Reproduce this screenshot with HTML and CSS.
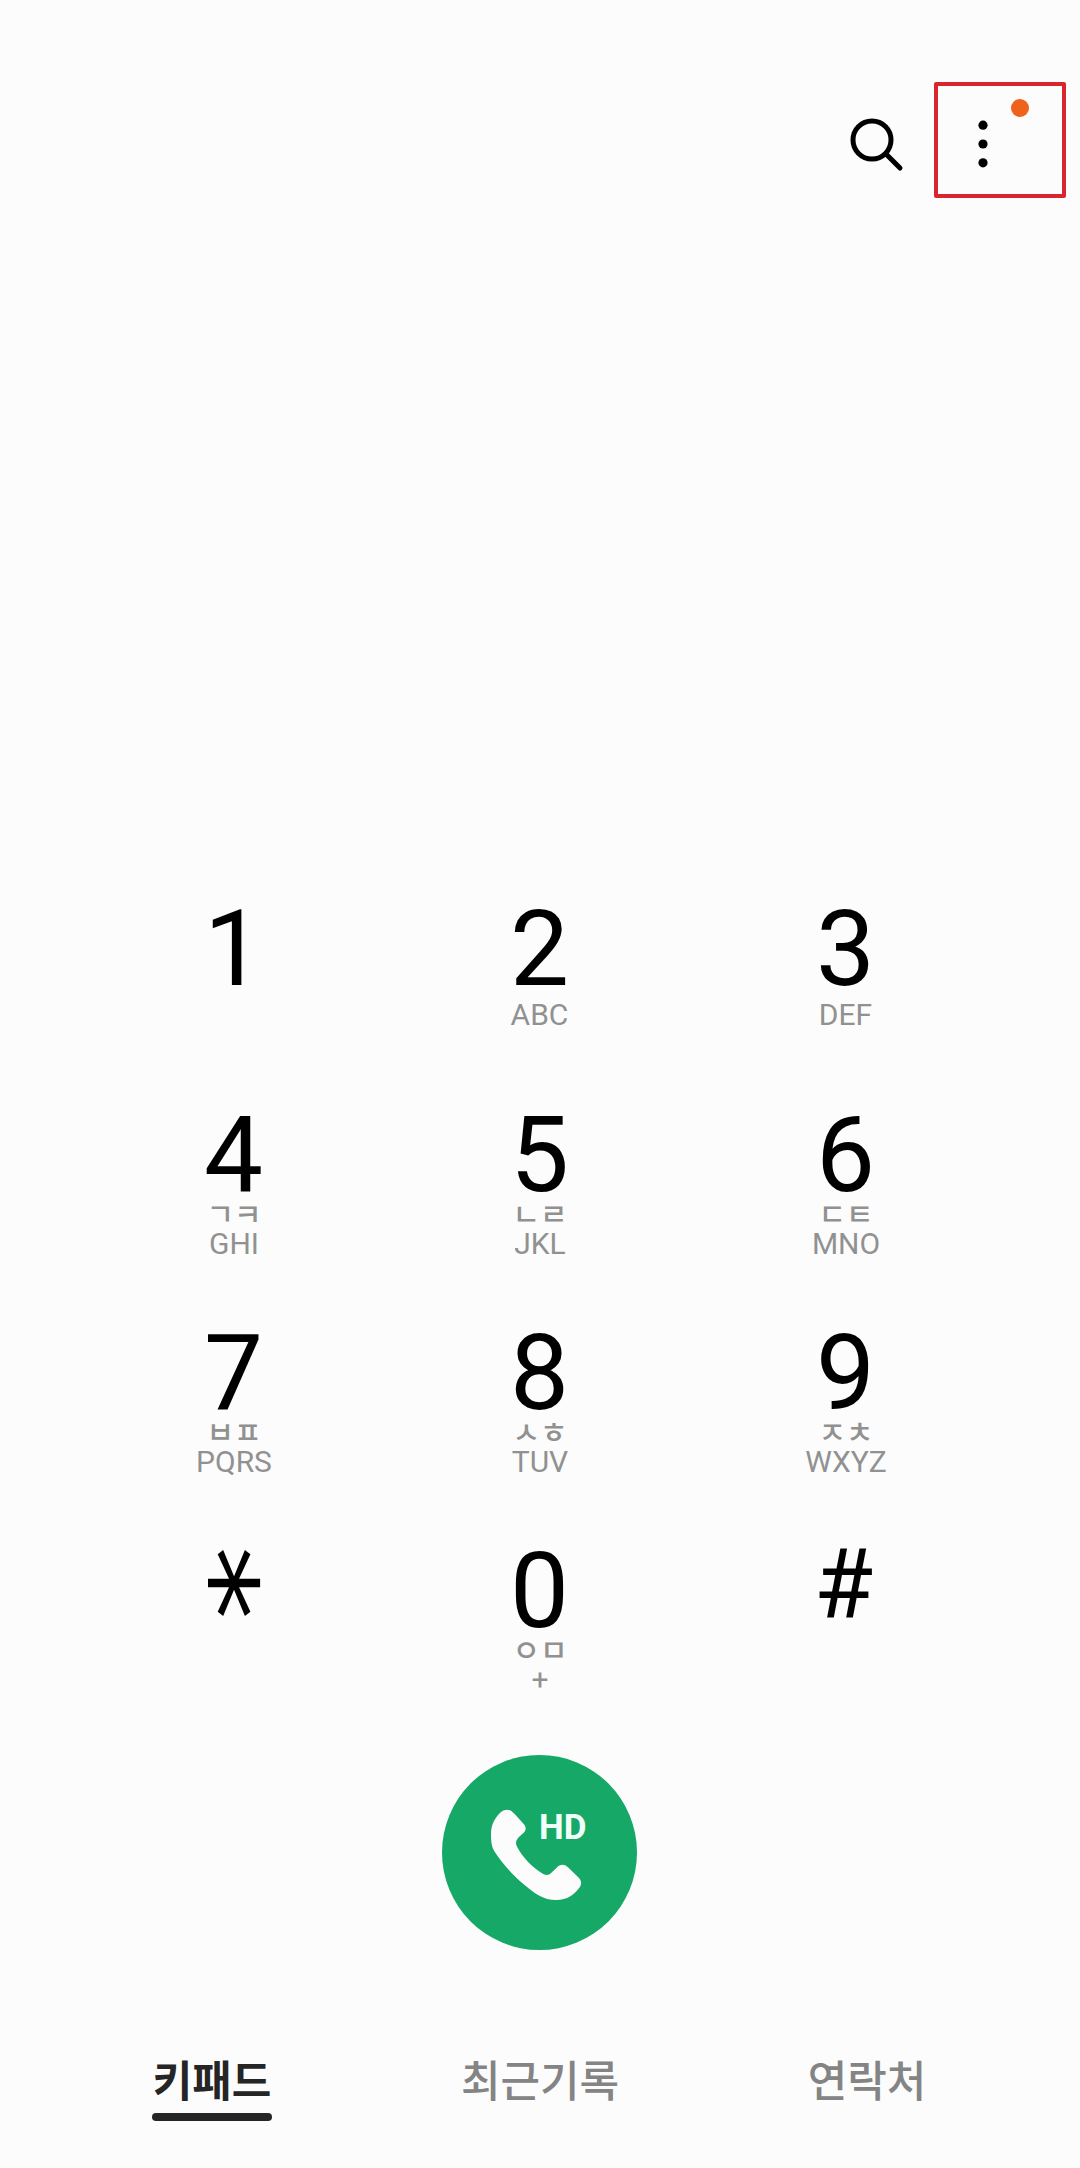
FILE: index.html
```html
<!DOCTYPE html>
<html lang="ko">

<head>
    <meta charset="UTF-8">
    <meta name="viewport" content="width=device-width, initial-scale=1.0">
    <title>키패드</title>
    <link rel="stylesheet" href="styles.css">
</head>

<body>
    <header class="toolbar">
        <svg class="search-icon" viewBox="0 0 54 54">
            <circle cx="22" cy="22" r="19" />
            <path d="M36 36 L50 50" />
        </svg>
        <div class="more">
            <svg class="more-icon" viewBox="0 0 12 48">
                <circle cx="6" cy="5.2" r="4.6" />
                <circle cx="6" cy="24" r="4.6" />
                <circle cx="6" cy="42.8" r="4.6" />
            </svg>
            <span class="badge"></span>
        </div>
    </header>

    <main class="keypad">
        <div class="key">
            <span class="digit">1</span>
        </div>
        <div class="key">
            <span class="digit">2</span>
            <span class="letters first">ABC</span>
        </div>
        <div class="key">
            <span class="digit">3</span>
            <span class="letters first">DEF</span>
        </div>
        <div class="key">
            <span class="digit">4</span>
            <span class="jamo">ㄱㅋ</span>
            <span class="letters">GHI</span>
        </div>
        <div class="key">
            <span class="digit">5</span>
            <span class="jamo">ㄴㄹ</span>
            <span class="letters">JKL</span>
        </div>
        <div class="key">
            <span class="digit">6</span>
            <span class="jamo">ㄷㅌ</span>
            <span class="letters">MNO</span>
        </div>
        <div class="key">
            <span class="digit">7</span>
            <span class="jamo">ㅂㅍ</span>
            <span class="letters">PQRS</span>
        </div>
        <div class="key">
            <span class="digit">8</span>
            <span class="jamo">ㅅㅎ</span>
            <span class="letters">TUV</span>
        </div>
        <div class="key">
            <span class="digit">9</span>
            <span class="jamo">ㅈㅊ</span>
            <span class="letters">WXYZ</span>
        </div>
        <div class="key">
            <span class="star">*</span>
        </div>
        <div class="key">
            <span class="digit">0</span>
            <span class="jamo">ㅇㅁ</span>
            <span class="letters">+</span>
        </div>
        <div class="key">
            <span class="hash">#</span>
        </div>
    </main>

    <div class="call">
        <div class="call-button">
            <svg class="call-icon" viewBox="66 75 585 585">
                <path d="M262 239 C272 239 278 246 284 252 L311 282 C319 291 319 300 311 308 L296 322 C288 331 285 340 292 352 C308 382 336 411 366 430 C377 437 386 436 394 428 L410 413 C421 402 433 402 444 412 L474 441 C486 453 486 463 477 475 C462 494 443 510 408 510 C370 510 346 492 310 462 C275 432 245 398 222 362 C214 348 213 332 213 312 C213 282 226 262 243 246 C249 241 255 239 262 239 Z" />
            </svg>
            <span class="hd">HD</span>
        </div>
    </div>

    <nav class="tabs">
        <a class="tab active">키패드</a>
        <a class="tab">최근기록</a>
        <a class="tab">연락처</a>
    </nav>
</body>

</html>
```

FILE: styles.css
```css
html, body {
    height: 100%;
    margin: 0;
    padding: 0;
}

body {
    display: flex;
    flex-direction: column;
    background-color: #fcfcfc;
    color: #000;
    font-family: Roboto, "Noto Sans CJK KR", sans-serif;
    overflow: hidden;
}

.toolbar {
    display: flex;
    justify-content: flex-end;
    align-items: flex-start;
    box-sizing: border-box;
    height: 902px;
    padding: 82px 14px 0 0;
}

.search-icon {
    width: 54px;
    height: 54px;
    margin: 36px 30px 0 0;
    fill: none;
    stroke: #000;
    stroke-width: 5;
    stroke-linecap: round;
}

.more {
    position: relative;
    box-sizing: border-box;
    width: 132px;
    height: 116px;
    border: 4px solid #d9262e;
    border-radius: 2px;
}

.more-icon {
    display: block;
    width: 12px;
    height: 48px;
    margin: 34px 0 0 39px;
}

.badge {
    position: absolute;
    top: 13px;
    right: 33px;
    width: 18px;
    height: 18px;
    border-radius: 50%;
    background-color: #ee621a;
}

.keypad {
    display: grid;
    grid-template-columns: repeat(3, 306px);
    grid-template-rows: 206px 218px 218px 211px;
    justify-content: center;
}

.key {
    display: flex;
    flex-direction: column;
    align-items: center;
}

.digit {
    margin-right: 1px;
    font-size: 105px;
    line-height: 96px;
}

.letters {
    color: #919191;
    font-size: 30px;
    line-height: 30px;
}

.letters.first {
    margin: 2px 1px 0 0;
}

.jamo {
    margin: -5px 0 4px;
    color: #919191;
    font-family: "Noto Sans CJK KR", sans-serif;
    font-size: 30px;
    font-weight: 500;
    line-height: 26px;
}

/* turned on its side so one arm lies flat */
.star {
    font-family: "DejaVu Sans", sans-serif;
    font-size: 120px;
    line-height: 96px;
    transform: translate(-20px, -9px) scale(0.95, 1.25) rotate(90deg);
}

.hash {
    margin-right: 5px;
    font-size: 96px;
    line-height: 80px;
}

.call {
    display: flex;
    justify-content: center;
    height: 293px;
}

.call-button {
    position: relative;
    width: 195px;
    height: 195px;
    margin-right: 1px;
    border-radius: 50%;
    background-color: #16a866;
}

.call-icon {
    display: block;
    width: 195px;
    height: 195px;
    fill: #fcfcfc;
}

.hd {
    position: absolute;
    top: 52px;
    left: 97px;
    color: #f0fff8;
    font-size: 35px;
    font-weight: 700;
    line-height: 41px;
}

.tabs {
    display: flex;
    justify-content: center;
    align-items: flex-start;
}

.tab {
    width: 327px;
    color: #848484;
    font-family: "Noto Sans CJK KR", sans-serif;
    font-size: 43px;
    font-weight: 500;
    line-height: 60px;
    text-align: center;
}

.tab.active {
    margin-right: 1px;
    margin-left: -1px;
    color: #252525;
    font-weight: 700;
}

.tab.active::after {
    content: "";
    display: block;
    width: 120px;
    height: 8px;
    margin: 5px auto 0;
    border-radius: 4px;
    background-color: #252525;
}
```
